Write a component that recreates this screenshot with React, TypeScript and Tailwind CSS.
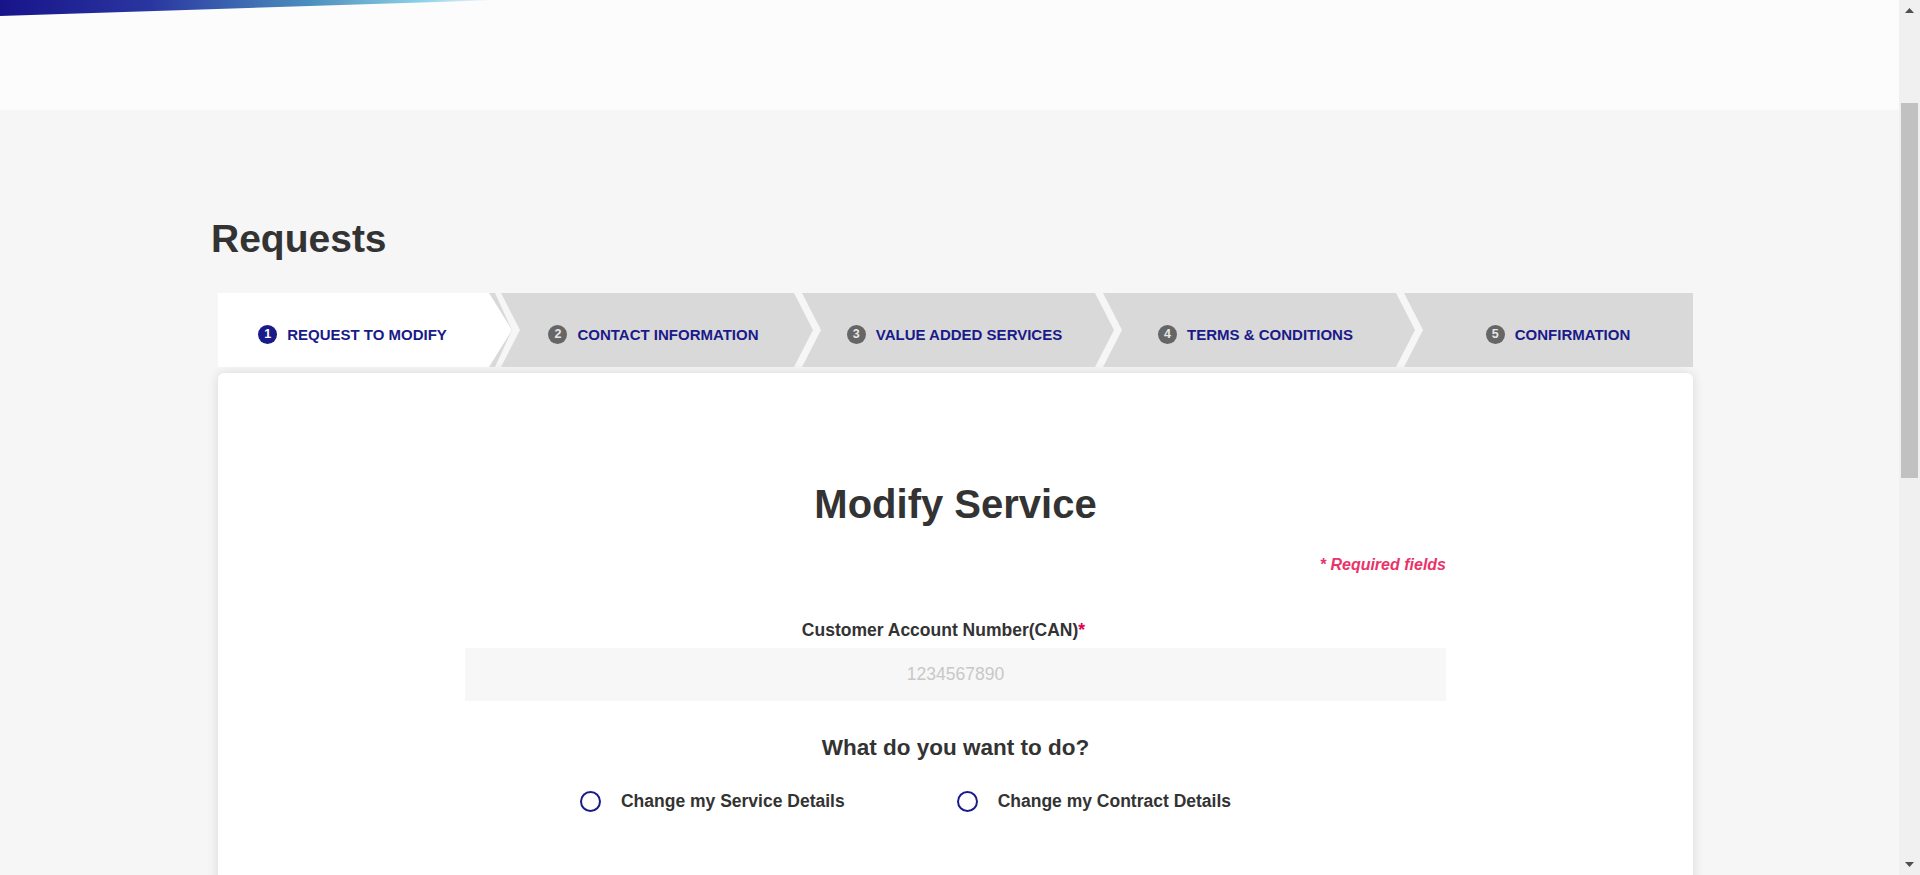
const steps = [
  { n: 1, label: 'REQUEST TO MODIFY' },
  { n: 2, label: 'CONTACT INFORMATION' },
  { n: 3, label: 'VALUE ADDED SERVICES' },
  { n: 4, label: 'TERMS & CONDITIONS' },
  { n: 5, label: 'CONFIRMATION' },
];

const StepLabel = ({ n, label, active }: { n: number; label: string; active?: boolean }) => {
  return (
    <div className="flex items-center gap-[10px]">
      <span
        className={
          active
            ? 'flex h-[19px] w-[19px] items-center justify-center rounded-full bg-[#1a1a8a] text-[12.5px] font-bold leading-none text-white'
            : 'flex h-[19px] w-[19px] items-center justify-center rounded-full bg-[#666666] text-[12.5px] font-bold leading-none text-[#e6e6e6]'
        }
      >
        {n}
      </span>
      <span className="whitespace-nowrap text-[15px] font-bold leading-none text-[#1a1a8a]">{label}</span>
    </div>
  );
};

const StepBar = () => {
  return (
    <div className="mt-[35px] flex h-[74px]">
      {/* first step: active, white arrow over a grey arrow */}
      <div className="h-full w-[294px] shrink-0 bg-[#d9d9d9] [clip-path:polygon(0_0,calc(100%_-_17px)_0,100%_50%,calc(100%_-_17px)_100%,0_100%)]">
        <div className="flex h-full w-full items-center justify-center bg-white pr-[25px] pt-[8px] [clip-path:polygon(0_0,calc(100%_-_23px)_0,100%_50%,calc(100%_-_23px)_100%,0_100%)]">
          <StepLabel n={steps[0].n} label={steps[0].label} active />
        </div>
      </div>

      {/* middle steps */}
      {steps.slice(1, 4).map((s) => (
        <div
          key={s.n}
          className="-ml-[11px] flex h-full w-[312px] shrink-0 items-center justify-center bg-[#d9d9d9] pl-[19px] pr-[26px] pt-[8px] [clip-path:polygon(0_0,calc(100%_-_19px)_0,100%_50%,calc(100%_-_19px)_100%,0_100%,19px_50%)]"
        >
          <StepLabel n={s.n} label={s.label} />
        </div>
      ))}

      {/* last step */}
      <div className="-ml-[11px] flex h-full flex-1 items-center justify-center bg-[#d9d9d9] pl-[19px] pt-[8px] [clip-path:polygon(0_0,100%_0,100%_100%,0_100%,19px_50%)]">
        <StepLabel n={steps[4].n} label={steps[4].label} />
      </div>
    </div>
  );
};

const RadioOption = ({ label }: { label: string }) => {
  return (
    <label className="flex items-center gap-[20px]">
      <span className="h-[21px] w-[21px] rounded-full border-2 border-[#1a1a8a] bg-white" />
      <span className="whitespace-nowrap text-[17.5px] font-bold leading-none text-[#333333]">{label}</span>
    </label>
  );
};

const Scrollbar = () => {
  return (
    <div className="flex h-full w-[21px] shrink-0 flex-col items-center bg-[#f0f0f0]">
      <div className="flex h-[21px] w-full items-center justify-center">
        <svg width="9" height="5" viewBox="0 0 9 5">
          <polygon points="4.5,0 9,5 0,5" fill="#505050" />
        </svg>
      </div>
      <div className="mt-[82px] h-[375px] w-[17px] bg-[#c1c1c1]" />
      <div className="flex-1" />
      <div className="flex h-[21px] w-full items-center justify-center">
        <svg width="9" height="5" viewBox="0 0 9 5">
          <polygon points="0,0 9,0 4.5,5" fill="#505050" />
        </svg>
      </div>
    </div>
  );
};

const App = () => {
  return (
    <div className="flex h-[875px] w-full overflow-hidden bg-[#f6f6f6] font-['Liberation_Sans',Arial,sans-serif]">
      <div className="flex min-w-0 flex-1 flex-col">
        {/* Header */}
        <header className="h-[110px] shrink-0 bg-[#fcfcfc]">
          <svg width="500" height="16" viewBox="0 0 500 16" className="block">
            <defs>
              <linearGradient id="band" x1="0" y1="0" x2="1" y2="0">
                <stop offset="0" stopColor="#17148a" />
                <stop offset="0.3" stopColor="#2a36a0" />
                <stop offset="0.62" stopColor="#4b8fbe" />
                <stop offset="0.85" stopColor="#8fd3e8" />
                <stop offset="1" stopColor="#ffffff" />
              </linearGradient>
            </defs>
            <polygon points="0,0 500,0 0,16" fill="url(#band)" />
          </svg>
        </header>

        <main className="ml-[218px] w-[1475px] pt-[109px]">
          <h1 className="-ml-[7px] text-[39px] font-bold leading-none text-[#333333]">Requests</h1>

          <StepBar />

          {/* Card */}
          <div className="mt-[6px] flex h-[600px] flex-col items-center rounded-[6px] bg-white pt-[111px] shadow-[0_0_12px_rgba(0,0,0,0.12)]">
            <h2 className="text-[40px] font-bold leading-none text-[#333333]">Modify Service</h2>

            <div className="flex w-[981px] flex-col">
              <p className="mt-[33px] text-right text-[16px] font-bold italic leading-none text-[#e8336b]">
                * Required fields
              </p>

              <p className="mt-[49px] pr-[24px] text-center text-[17.5px] font-bold leading-none text-[#333333]">
                Customer Account Number(CAN)<span className="text-[#e8004c]">*</span>
              </p>
              <input
                readOnly
                placeholder="1234567890"
                className="mt-[8px] h-[53px] w-full bg-[#f7f7f7] text-center text-[17.5px] text-[#333333] outline-none placeholder:text-[#c8c8c8]"
              />

              <p className="mt-[36px] text-center text-[22.5px] font-bold leading-none text-[#333333]">
                What do you want to do?
              </p>

              <div className="mt-[32px] flex justify-center gap-[112px] pr-[100px]">
                <RadioOption label="Change my Service Details" />
                <RadioOption label="Change my Contract Details" />
              </div>
            </div>
          </div>
        </main>
      </div>
      <Scrollbar />
    </div>
  );
};

export default App;
